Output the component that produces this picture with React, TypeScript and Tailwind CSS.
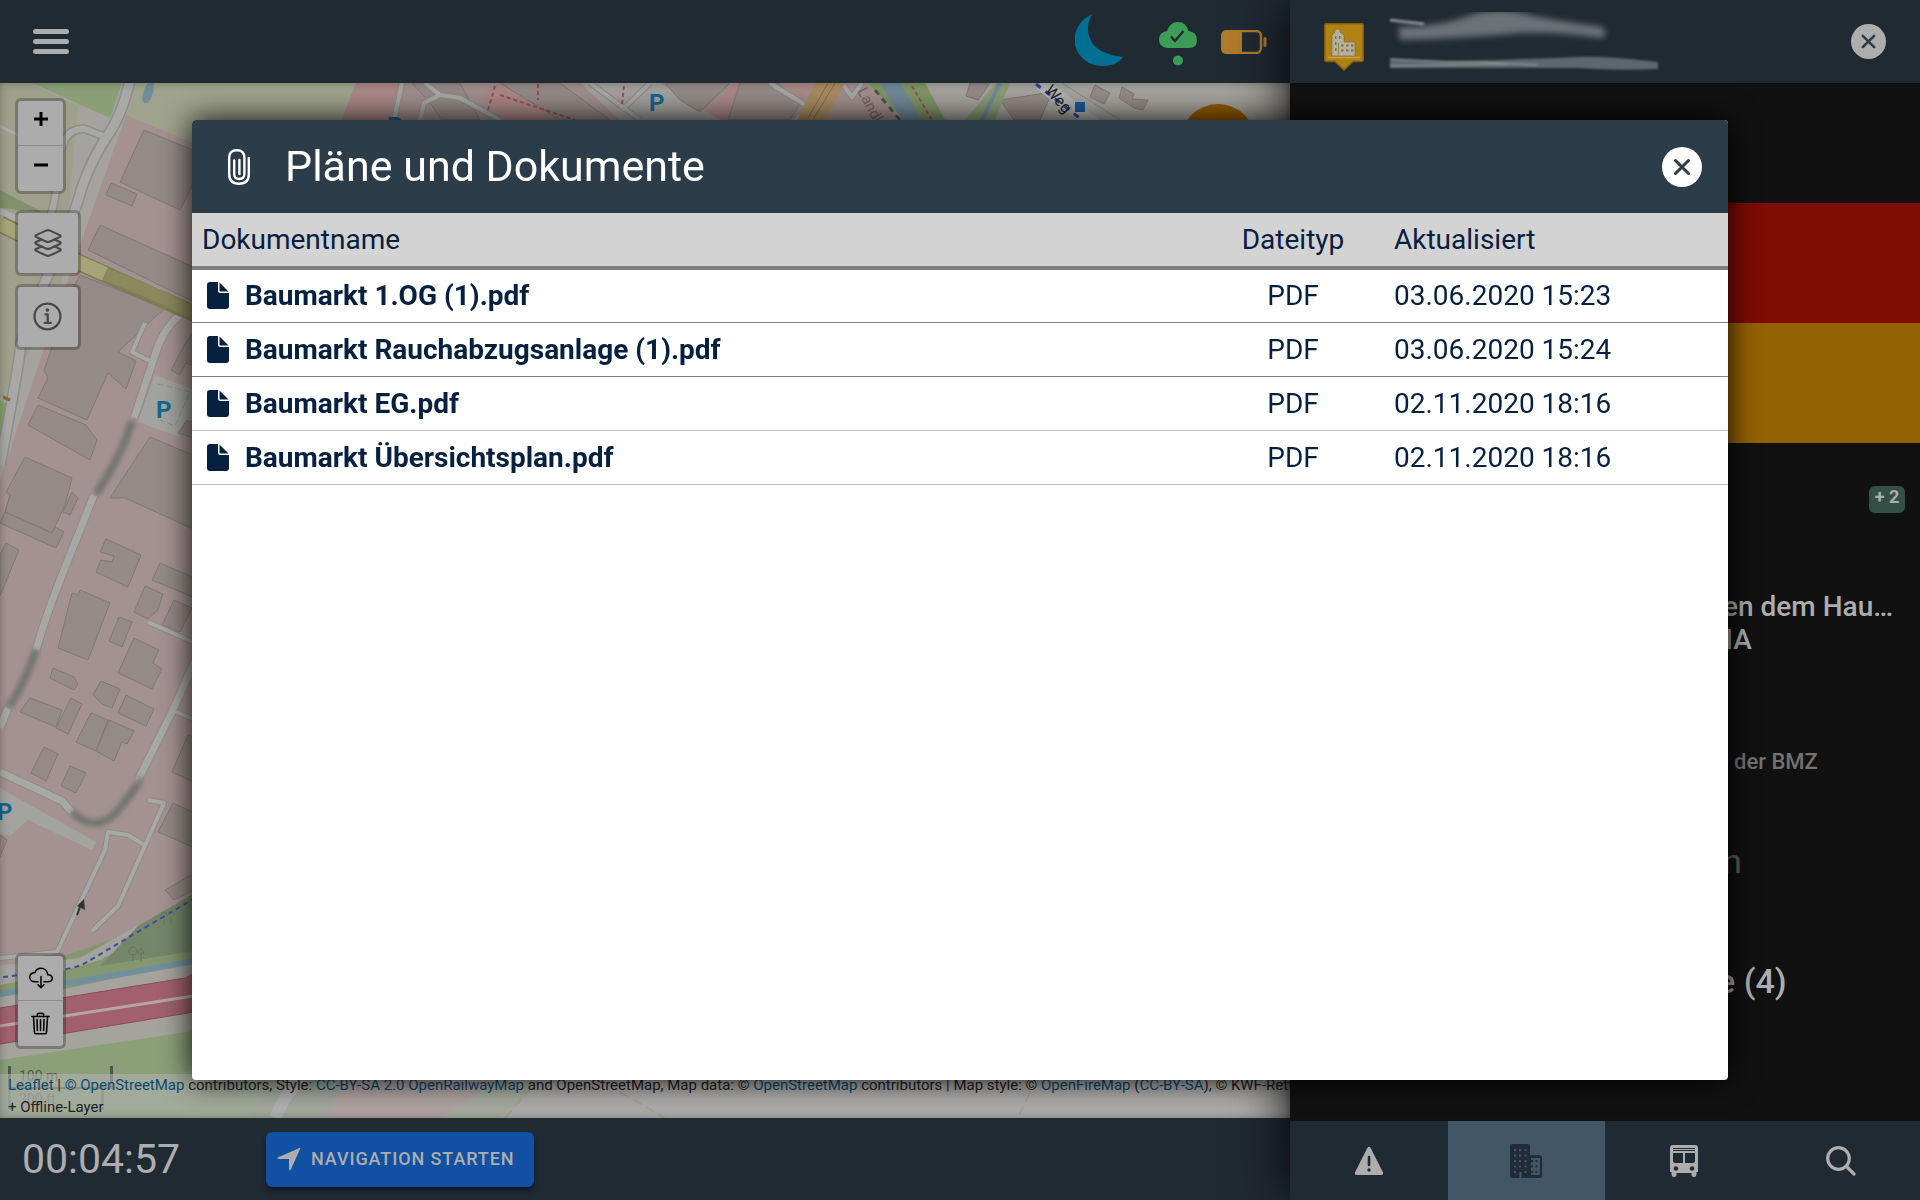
import type { ReactNode } from 'react';
import {
  IoCloudDownloadOutline,
  IoInformationCircleOutline,
  IoLayersOutline,
  IoTrashOutline,
} from 'react-icons/io5';

interface PlanDocument {
  name: string;
  type: string;
  updated: string;
  strongLine?: boolean;
}

const documents: PlanDocument[] = [
  { name: 'Baumarkt 1.OG (1).pdf', type: 'PDF', updated: '03.06.2020 15:23', strongLine: true },
  { name: 'Baumarkt Rauchabzugsanlage (1).pdf', type: 'PDF', updated: '03.06.2020 15:24', strongLine: true },
  { name: 'Baumarkt EG.pdf', type: 'PDF', updated: '02.11.2020 18:16' },
  { name: 'Baumarkt Übersichtsplan.pdf', type: 'PDF', updated: '02.11.2020 18:16' },
];

const buildings = [
  '144,130 200,153 200,170 180,210 120,182',
  '111,183 137,194 132,206 106,195',
  '100,225 200,270 200,305 88,250',
  '80,275 165,308 118,352 136,361 126,389 108,373 87,420 38,398 48,378 44,370 72,290',
  '38,405 86,425 97,440 90,460 28,425',
  '25,457 72,478 65,505 52,533 5,512 10,495 6,492',
  '72,492 78,498 70,515 63,512',
  '5,512 52,533 55,527 64,532 56,548 0,523',
  '6,543 19,550 0,596 0,555',
  '150,437 200,458 200,532 125,498 110,498',
  '200,325 186,342 171,370 180,375 186,363 200,368',
  '187,420 200,426 200,440 178,433',
  '106,539 141,555 128,587 96,572 101,560 112,562 114,556 100,552',
  '160,563 200,580 200,600 152,580',
  '80,590 110,603 88,660 58,648 72,593 78,595',
  '145,586 163,594 158,610 148,619 134,612',
  '174,600 192,608 180,632 162,625',
  '119,617 132,622 122,647 109,641',
  '134,638 159,650 153,663 162,669 152,689 118,673',
  '53,668 74,677 78,684 74,690 50,678',
  '101,681 120,689 112,708 102,704 93,695',
  '126,695 154,709 146,726 118,713',
  '71,698 82,704 68,734 56,728',
  '30,698 62,710 56,727 20,712',
  '91,713 108,720 96,751 76,742',
  '109,720 134,731 127,744 122,742 114,761 96,751 108,722',
  '44,747 58,754 46,781 31,773',
  '70,766 86,773 76,793 61,786',
  '173,803 200,815 200,850 158,832',
  '188,735 200,740 200,785 172,772',
  '200,870 165,890 174,900 200,887',
  '0,835 7,840 0,857',
  '412,83 460,83 480,120 442,120 430,103',
  '500,83 560,83 610,120 560,120',
  '665,83 730,83 700,112 680,100',
  '740,83 778,83 800,104 790,120 728,120',
  '970,83 990,83 978,100 966,96',
  '1000,100 1052,92 1040,120 1014,120',
  '1095,85 1110,93 1104,104 1090,97',
  '1122,87 1134,94 1132,99 1148,100 1143,110 1134,108 1119,98',
];

const parkingMarks = [
  { x: 156, y: 418 },
  { x: -3, y: 820 },
  { x: 649, y: 111 },
  { x: 387, y: 134 },
];

const mainRoads = [
  'M180,315 Q162,330 155,355 L134,418',
  'M94,495 Q78,535 62,575 T36,650',
  'M8,708 L0,728',
  'M0,772 L62,801 L72,812',
  'M138,780 L172,712 L200,650',
];

const localRoads = [
  'M145,323 L132,352 L152,362',
  'M172,710 L200,722',
  'M148,622 L200,645',
  'M0,958 L57,952 L105,850 L108,832 L128,835 L146,846',
  'M148,800 L164,803 L118,906 L92,931',
  'M394,120 L402,83',
  'M420,120 L424,103 L440,95 L425,83 M440,95 L460,98 L500,120',
  'M590,83 L640,120 M650,83 L622,110',
  'M770,83 L810,108 L795,120',
  'M842,83 L852,97 L862,83',
];

function MapCanvas() {
  return (
    <svg
      className="absolute inset-0 h-full w-full"
      viewBox="0 83 1290 1035"
      preserveAspectRatio="xMinYMin slice"
      aria-hidden="true"
    >
      <rect y="83" width="1290" height="1035" fill="#a5a39d" />

      {/* fields and meadows */}
      <path d="M125,83 H372 L355,150 H128 Z" fill="#a0a38d" />
      <path d="M0,83 L30,83 L78,106 L60,300 L0,400 Z" fill="#9fa08c" />
      <path d="M32,83 H122 L110,118 L72,101 Z" fill="#8a9f77" />
      <path d="M0,190 L42,212 L0,208 Z" fill="#82906b" />
      <path d="M0,400 L7,405 L0,440 Z" fill="#87a06f" />

      {/* industrial area */}
      <path d="M126,115 L200,146 V900 L140,925 L80,960 L0,965 V480 L45,345 L80,245 Z" fill="#a49291" />
      <path d="M356,83 H880 L900,120 H342 Z" fill="#a08f8c" />
      <path d="M356,83 H400 L388,120 H342 Z M505,120 L480,95 L500,83 L560,120 Z M735,83 L700,120 H730 L748,83 Z M780,83 H816 L800,100 Z" fill="#a98886" />
      <path d="M580,83 H660 L720,120 H620 Z" fill="#a3a09d" />
      <path d="M155,375 L200,392 V415 L177,436 L138,422 Z" fill="#a3a3a0" />
      <path d="M0,788 L96,842 L92,850 L28,820 L10,836 L0,833 Z" fill="#a3a3a0" />
      <path d="M158,384 L190,392 L175,426 L160,420" fill="none" stroke="#8e8e8c" strokeDasharray="6 3" />

      {buildings.map((points) => (
        <polygon key={points} points={points} fill="#948a87" stroke="#817775" />
      ))}

      {/* local roads */}
      <g fill="none" strokeLinejoin="round">
        {localRoads.map((d) => (
          <path key={d} d={d} stroke="#908987" strokeWidth="6" />
        ))}
        {mainRoads.map((d) => (
          <path key={d} d={d} stroke="#908987" strokeWidth="9" />
        ))}
        {localRoads.map((d) => (
          <path key={d} d={d} stroke="#a8a8a6" strokeWidth="4" />
        ))}
        {mainRoads.map((d) => (
          <path key={d} d={d} stroke="#a8a8a6" strokeWidth="7" />
        ))}
        <g stroke="#8f8d89" strokeWidth="12">
          <path d="M130,80 Q122,115 108,135 T82,187 Q75,215 48,275 T20,350 T0,465" />
          <path d="M62,150 Q65,128 85,129 L108,138 M56,190 Q54,215 42,230" strokeWidth="9" />
        </g>
        <g stroke="#a8a8a6" strokeWidth="9">
          <path d="M130,80 Q122,115 108,135 T82,187 Q75,215 48,275 T20,350 T0,465" />
          <path d="M62,150 Q65,128 85,129 L108,138 M56,190 Q54,215 42,230" strokeWidth="6" />
        </g>
        <path d="M0,211 L45,232" stroke="#adadab" strokeWidth="6" />
        <path d="M0,126 L20,136" stroke="#adadab" strokeWidth="3" />
        <path d="M0,224 L80,263 L140,290 L200,316" stroke="#7f7c56" strokeWidth="17" />
        <path d="M0,224 L80,263 L105,274" stroke="#a5a577" strokeWidth="14" />
        <path d="M105,274 L150,292 L200,316" stroke="#8a8a5d" strokeWidth="13" />
        <path d="M3,397 L10,400" stroke="#8a6a30" strokeWidth="3" />
      </g>

      {/* blurred out street names */}
      <g fill="none" stroke="#747673" strokeWidth="8" className="blur-[2px]">
        <path d="M132,421 Q122,455 96,494" />
        <path d="M36,650 Q26,680 9,707" />
        <path d="M72,812 Q98,836 120,808 T138,780" />
      </g>

      {/* stream, meadow and motorway */}
      <path d="M0,975 Q90,950 140,927 L200,890 V960 L60,990 L0,995 Z" fill="#84976f" />
      <path d="M0,966 L80,958 L138,925 L138,940 L100,960 L50,975 L0,985 Z" fill="#a5a39d" />
      <path d="M138,926 L200,890 V950 L100,966 Z" fill="#74876a" />
      <path d="M0,994 Q90,980 200,960" fill="none" stroke="#71909c" strokeWidth="6" />
      <path d="M0,1005 L200,970 V1045 L0,1062 Z" fill="#a5a39d" />
      <path d="M0,1008 L185,978 L200,968 V1011 L0,1044 Z" fill="#a0606f" />
      <path d="M0,1026 L200,995" stroke="#b5a5a5" strokeWidth="3" />
      <path d="M0,1008 L185,978 M0,1044 L200,1011" stroke="#914a5c" strokeWidth="1" />
      <path d="M0,1060 L200,1030 H340 V1118 H0 Z" fill="#8ba079" />
      <path d="M3,977 L20,975 Q60,972 82,965 L200,895" fill="none" stroke="#3d4ba3" strokeWidth="2" strokeDasharray="5 4" />
      <path d="M77,915 L81,904" stroke="#333" strokeWidth="2" />
      <path d="M84,899 L85,910 L77,906 Z" fill="#333" />
      <g fill="none" stroke="#66745c">
        <path d="M133,961 V954 M129,952 a4,5 0 1 1 8,0 a4,3 0 1 1 -8,0 M141,961 V953 M138,953 L141,948 L144,953 Z" />
        <path d="M164,925 V918 M161,916 a3,4 0 1 1 6,0 M171,923 V916 M168,915 a3,4 0 1 1 6,0" />
      </g>

      {/* strip along the upper edge */}
      <path d="M148,83 h6 q0,12 -5,19 q-6,3 -7,-3 q1,-10 6,-16 z" fill="#728f99" />
      <path d="M815,83 H845 L825,120 H797 Z" fill="#a88b63" />
      <path d="M835,83 L813,120 M828,83 L808,118" stroke="#86683d" />
      <path d="M868,83 H925 L945,120 H905 Z" fill="#7f9567" />
      <path d="M880,83 H900 L922,120 H902 Z" fill="#71899a" />
      <path d="M875,90 L900,120" stroke="#4e5b49" strokeWidth="3" strokeDasharray="6 5" />
      <path d="M912,86 L932,120 M495,86 L488,110 M500,95 L575,120 M624,86 L622,104 M538,84 V100" fill="none" stroke="#9f4a58" strokeWidth="2" strokeDasharray="4 3" />
      <path d="M996,83 H1010 L995,120 H965 Z" fill="#8a9c75" />
      <path d="M1000,83 L982,120" stroke="#71899a" strokeWidth="4" />
      <path d="M1040,83 L1095,125" stroke="#b0b0b0" strokeWidth="14" />
      <path d="M1062,83 L1120,120" stroke="#8a8a88" />
      <path d="M1036,84 L1082,120" stroke="#35419b" strokeWidth="3" strokeDasharray="6 6" />
      <rect x="1075" y="102" width="10" height="10" fill="#165a96" />
      <circle cx="1218" cy="142" r="38" fill="#945d02" />
      <text x="1044" y="91" transform="rotate(48 1044 91)" fontSize="16" fill="#222" className="font-[Roboto,sans-serif]">
        Weg
      </text>
      <text x="857" y="91" transform="rotate(62 857 91)" fontSize="15" fill="#77605f" className="font-[Roboto,sans-serif]">
        Landl
      </text>

      {/* strip along the lower edge */}
      <path d="M270,1080 H345 L325,1118 H250 Z" fill="#8b9a7c" />
      <path d="M350,1078 L325,1118 H440 L500,1078 Z" fill="#aa8c89" />
      <path d="M440,1118 L500,1078 H545 L500,1118 Z" fill="#93a181" />
      <path d="M300,1078 Q285,1095 275,1118" fill="none" stroke="#b0b0ae" strokeWidth="12" />
      <path d="M505,1118 L540,1078 M620,1092 L665,1118 M1030,1092 L1018,1118" stroke="#8e8a66" strokeWidth="2" strokeDasharray="10 5" />

      {parkingMarks.map(({ x, y }) => (
        <text key={`${x}-${y}`} x={x} y={y} fontSize="24" fontWeight="700" fill="#126690" className="font-[Roboto,sans-serif]">
          P
        </text>
      ))}
    </svg>
  );
}

function CloseButton({ className, label }: { className: string; label: string }) {
  return (
    <button type="button" aria-label={label} className={className}>
      <svg viewBox="0 0 40 40" className="h-full w-full">
        <circle cx="20" cy="20" r="20" fill="currentColor" />
        <path d="M13.5 13.5 26.5 26.5M26.5 13.5 13.5 26.5" stroke="#2d3c49" strokeWidth="3" strokeLinecap="round" />
      </svg>
    </button>
  );
}

function FileIcon() {
  return (
    <svg viewBox="0 0 22 27" className="h-[27px] w-[22px] shrink-0" fill="#06203f">
      <path d="M3 0H11V8.500Q11 11 13.500 11H22V24Q22 27 19 27H3Q0 27 0 24V3Q0 0 3 0Z" />
      <path d="M12.500 0.500 21.500 9.500H13.500Q12.500 9.500 12.500 8.500Z" />
    </svg>
  );
}

function PaperclipIcon() {
  return (
    <svg viewBox="0 0 22 36" className="h-9 w-[22px]" fill="none" stroke="#fff" strokeWidth="2.4" strokeLinecap="round">
      <path d="M20.800 9V25Q20.800 34.800 11 34.800T1.200 25V8.500Q1.200 1.200 8.800 1.200T16.400 8.500V24.500Q16.400 30 11.200 30T6.200 24.500V11.500" />
      <path d="M11.400 11V25" />
    </svg>
  );
}

function MapControl({ children }: { children: ReactNode }) {
  return (
    <div className="flex w-fit flex-col overflow-hidden rounded-md border-[3px] border-black/25 bg-[#acacac] bg-clip-padding text-black">
      {children}
    </div>
  );
}

function MapControls() {
  const small = 'flex h-[45px] w-[45px] items-center justify-center';
  const large = 'flex h-[60px] w-[60px] items-center justify-center text-[#484848]';

  return (
    <div className="absolute inset-x-[15px] top-[15px] bottom-[69px] flex flex-col justify-between">
      <div className="flex flex-col gap-2">
        <div className="mb-2">
          <MapControl>
            <button type="button" aria-label="Vergrößern" className={`${small} border-b border-[#8a8a8a]`}>
              <svg viewBox="0 0 14 14" className="mb-2 h-3.5 w-3.5">
                <path d="M7 0V14M0 7H14" stroke="#000" strokeWidth="3" />
              </svg>
            </button>
            <button type="button" aria-label="Verkleinern" className={small}>
              <svg viewBox="0 0 14 14" className="mb-2 h-3.5 w-3.5">
                <path d="M0 7H14" stroke="#000" strokeWidth="3" />
              </svg>
            </button>
          </MapControl>
        </div>
        <MapControl>
          <button type="button" aria-label="Ebenen" className={large}>
            <IoLayersOutline size={34} />
          </button>
        </MapControl>
        <MapControl>
          <button type="button" aria-label="Information" className={large}>
            <IoInformationCircleOutline size={36} />
          </button>
        </MapControl>
      </div>
      <MapControl>
        <button type="button" aria-label="Karte herunterladen" className={`${small} border-b border-[#8a8a8a]`}>
          <IoCloudDownloadOutline size={24} />
        </button>
        <button type="button" aria-label="Karte löschen" className={small}>
          <IoTrashOutline size={25} />
        </button>
      </MapControl>
    </div>
  );
}

function MapLink({ children }: { children: ReactNode }) {
  return (
    <a href="#" className="text-[#0c4a70]">
      {children}
    </a>
  );
}

function MapView() {
  return (
    <main className="relative flex-1 overflow-hidden">
      <MapCanvas />
      <MapControls />
      <div className="absolute bottom-2 left-2 text-sm leading-5 text-[#333]/70">
        <div className="h-[23px] w-[105px] border-x-[3px] border-b-2 border-[#444]/80 px-2">100 m</div>
        <div className="h-[21px] w-24 border-x-[3px] border-[#555]/50 px-2 text-[#333]/50">300 ft</div>
      </div>
      <div className="absolute inset-x-0 bottom-0 h-11 overflow-hidden bg-[#b2b2b2]/60 px-2 text-[15px] leading-[22px] whitespace-nowrap text-[#222]">
        <p>
          <MapLink>Leaflet</MapLink> | <MapLink>© OpenStreetMap</MapLink> contributors, Style:{' '}
          <MapLink>CC-BY-SA 2.0</MapLink> <MapLink>OpenRailwayMap</MapLink> and OpenStreetMap, Map data: ©{' '}
          <MapLink>OpenStreetMap</MapLink> contributors | Map style: © <MapLink>OpenFireMap</MapLink> (
          <MapLink>CC-BY-SA</MapLink>), © KWF-Rettungspunkte
        </p>
        <p>+ Offline-Layer</p>
      </div>
      <div className="pointer-events-none absolute inset-0 shadow-[inset_0_0_8px_rgba(0,0,0,0.3)]" />
    </main>
  );
}

function TopBar() {
  return (
    <header className="flex h-[83px] shrink-0 items-center justify-between bg-[#202a33] pr-[23px] pl-[33px]">
      <button type="button" aria-label="Menü" className="flex flex-col gap-[5px]">
        <span className="h-[5px] w-9 rounded-full bg-[#adadad]" />
        <span className="h-[5px] w-9 rounded-full bg-[#adadad]" />
        <span className="h-[5px] w-9 rounded-full bg-[#adadad]" />
      </button>
      <div className="flex items-center">
        <svg viewBox="0 0 48 54" className="mr-9 mb-1 h-[54px] w-12">
          <path d="M17.500 1Q9 15 16 28T48 44Q42 53 27 53Q12 53 4 41T2 16Q6 6 17.500 1Z" fill="#036f92" />
        </svg>
        <svg viewBox="0 0 38 44" className="mr-6 mt-1 h-11 w-[38px]">
          <path d="M8 26Q0 25 0 17.500Q0 10 8 9Q11 0 19 0T29.500 9Q38 10 38 18T30 26Z" fill="#3c9d57" />
          <path d="M12 14.500 16 19 24.500 9" fill="none" stroke="#202a33" strokeWidth="2.400" />
          <circle cx="19" cy="38.500" r="5" fill="#3c9d57" />
        </svg>
        <svg viewBox="0 0 46 24" className="h-6 w-[46px]">
          <rect x="1" y="1" width="39" height="22" rx="5" fill="none" stroke="#b07b2b" strokeWidth="2.400" />
          <path d="M5 1H21V23H5Q1 23 1 18V6Q1 1 5 1Z" fill="#b07b2b" />
          <rect x="42.500" y="7" width="3" height="10" rx="1.500" fill="#b07b2b" />
        </svg>
      </div>
    </header>
  );
}

function BottomBar() {
  return (
    <footer className="flex h-[82px] shrink-0 items-center bg-[#202a33] text-[#adadad]">
      <time className="w-[243px] pl-[22px] text-[41px] leading-none">00:04:57</time>
      <button
        type="button"
        className="ml-[23px] flex h-[55px] w-[268px] items-center rounded-md bg-[#1150a3] pl-[11px] text-lg font-medium tracking-wider shadow-md shadow-black/40"
      >
        <svg viewBox="0 0 24 24" className="mr-2.5 h-6 w-6 shrink-0" fill="currentColor">
          <path d="M22 1.200Q24 0 23 2.200L13.800 22.500Q12.500 24.500 12 22V12H1.800Q-.8 11.500 1.200 10.200Z" />
        </svg>
        NAVIGATION STARTEN
      </button>
    </footer>
  );
}

function ObjectMarker() {
  return (
    <svg viewBox="0 0 40 48" className="h-12 w-10">
      <path d="M2 .8H38Q39.200 .8 39.200 2V37Q39.200 38.500 37.500 38.500H29L20 47L11 38.500H2.500Q.8 38.500 .8 37V2Q.8 .8 2 .8Z" fill="#ae8213" stroke="#8a5c0b" strokeWidth="1.500" />
      <path d="M8 33V12L11 9V7.500L13.500 5.500L16 7.500V9L20 12V19H31V33Z" fill="#b3b0a4" stroke="#8a6a1c" strokeWidth=".7" />
      <path d="M4 34.500H36" stroke="#c5a34f" strokeWidth="1.500" />
      <path d="M11 13h1.500v3h-1.500zM15 13h1.500v3h-1.500zM11 19h1.500v3h-1.500zM11 25h1.500v3h-1.500zM17 21.500h2.500v2h-2.500zM22 21.500h2.500v2h-2.500zM27 21.500h2.500v2h-2.500zM17 26.500h2.500v2h-2.500zM22 26.500h2.500v2h-2.500zM27 26.500h2.500v2h-2.500z" fill="#8f6f20" />
      <path d="M14.500 20V33" stroke="#8f6f20" strokeWidth=".7" />
    </svg>
  );
}

function BlurredTitle() {
  return (
    <svg viewBox="0 0 280 60" className="ml-6 h-[60px] w-[280px]" aria-hidden="true">
      <g className="blur-[3px]">
        <path d="M10 15Q50 15 80 4T150 5Q180 10 214 15Q222 25 212 26Q160 18 120 22T12 28Z" fill="#6c7275" />
      </g>
      <g className="blur-[1px]">
        <path d="M2 8L36 12" stroke="#878b8d" strokeWidth="3" />
        <path d="M2 47Q60 50 110 48T190 45T270 50V57Q230 59 190 56H2Z" fill="#60676b" />
        <path d="M2 47L60 50H90L150 53M2 54L120 52" fill="none" stroke="#8a8f91" strokeWidth="1.500" />
      </g>
    </svg>
  );
}

function TabIcon({ name }: { name: string }) {
  switch (name) {
    case 'Gefahren':
      return (
        <svg viewBox="0 0 30 30" className="h-[30px] w-[30px]" fill="currentColor">
          <path d="M13.200 2.200Q15 -.5 16.800 2.200L28.800 26Q30 29 27 29H3Q0 29 1.200 26Z" />
          <path d="M15 11V19" stroke="#202a33" strokeWidth="2.600" strokeLinecap="round" />
          <circle cx="15" cy="24" r="1.700" fill="#202a33" />
        </svg>
      );
    case 'Objekt':
      return (
        <svg viewBox="0 0 32 34" className="h-[34px] w-8" fill="#202d38">
          <path d="M2 0H18Q20 0 20 2V11H29Q32 11 32 14V32Q32 34 30 34H11.500V28H9.500V34H2Q0 34 0 32V2Q0 0 2 0Z" />
          <path d="M21 14H30V31H21Z" fill="#425665" />
          <path d="M4 5h2v2H4zM9 5h2v2H9zM14.500 5h2v2h-2zM4 10.500h2v2H4zM9 10.500h2v2H9zM14.500 10.500h2v2h-2zM4 16h2v2H4zM9 16h2v2H9zM14.500 16h2v2h-2zM4 21.500h2v2H4zM9 21.500h2v2H9zM14.500 21.500h2v2h-2zM4 27h2v2H4zM14.500 27h2v2h-2z" fill="#425665" />
          <path d="M21 16h2v2h-2zM25.500 16h2v2h-2zM21 21.500h2v2h-2zM25.500 21.500h2v2h-2zM21 27h2v2h-2zM25.500 27h2v2h-2z" />
        </svg>
      );
    case 'Fahrzeuge':
      return (
        <svg viewBox="0 0 28 32" className="h-8 w-7" fill="currentColor">
          <path d="M3 0H25Q28 0 28 3V27H26.500V30Q26.500 32 24 32T21.500 30V28H6.500V30Q6.500 32 4 32T1.500 30V27H0V3Q0 0 3 0Z" />
          <path d="M3 3.500H25M3 5.500H25" stroke="#202a33" strokeWidth="1.200" />
          <path d="M3 8H13V18H5Q3 18 3 16ZM15 8H25V16Q25 18 23 18H15Z" fill="#202a33" />
          <circle cx="6" cy="23.500" r="2.200" fill="#202a33" />
          <circle cx="22" cy="23.500" r="2.200" fill="#202a33" />
        </svg>
      );
    default:
      return (
        <svg viewBox="0 0 30 30" className="h-[30px] w-[30px]" fill="none" stroke="currentColor" strokeWidth="3.200" strokeLinecap="round">
          <circle cx="12.500" cy="12.500" r="10.800" />
          <path d="M20.500 20.500 28 28" />
        </svg>
      );
  }
}

function SidePanel() {
  return (
    <aside className="flex w-[630px] shrink-0 flex-col bg-[#111] text-[#adadad] shadow-[0_0_50px_rgba(0,0,0,0.95)]">
      <header className="flex h-[83px] shrink-0 items-center bg-[#202a33] px-[34px]">
        <div className="pt-2.5">
          <ObjectMarker />
        </div>
        <BlurredTitle />
        <CloseButton label="Objekt schließen" className="ml-auto h-[35px] w-[35px]" />
      </header>
      <div className="h-[120px] shrink-0" />
      <div className="h-[120px] shrink-0 bg-[#7f0b02]" />
      <div className="h-[120px] shrink-0 bg-[#936203]" />
      <section className="flex min-h-0 flex-1 flex-col items-end overflow-hidden">
        <span className="mt-[43px] mr-[15px] h-[27px] w-9 rounded-md bg-[#335046] text-center text-lg leading-[22px] font-bold">
          + 2
        </span>
        <div className="w-[197px] pt-[77px]">
          <p className="text-[28px] leading-[33px] font-medium whitespace-nowrap">
            en dem Hau…
            <br />
            <span className="pl-0.5">IA</span>
          </p>
          <p className="mt-[93px] pl-[11px] text-[22px] leading-[26px] font-medium text-[#727272]">der BMZ</p>
          <p className="mt-[66px] text-[34px] leading-[40px] text-[#5f5f5f]">n</p>
          <p className="mt-20 -ml-1.5 text-[34px] leading-[40px] font-medium">e (4)</p>
        </div>
      </section>
      <nav className="grid h-[79px] shrink-0 grid-cols-4 bg-[#202a33]">
        {['Gefahren', 'Objekt', 'Fahrzeuge', 'Suche'].map((name) => (
          <button
            key={name}
            type="button"
            aria-label={name}
            className={`flex items-center justify-center ${name === 'Objekt' ? 'bg-[#425665]' : ''}`}
          >
            <TabIcon name={name} />
          </button>
        ))}
      </nav>
    </aside>
  );
}

function DocumentsDialog() {
  return (
    <div className="fixed inset-0 flex items-center justify-center">
      <div
        role="dialog"
        aria-modal="true"
        aria-labelledby="documents-title"
        className="flex h-4/5 w-4/5 flex-col overflow-hidden rounded-sm bg-white text-[#06203f] shadow-[0_0_30px_rgba(0,0,0,0.95)]"
      >
        <header className="flex h-[93px] shrink-0 items-center bg-[#2d3c49] pr-[26px] pl-9 text-white">
          <PaperclipIcon />
          <h1 id="documents-title" className="mb-0.5 ml-[35px] text-[43px] leading-[50px]">
            Pläne und Dokumente
          </h1>
          <CloseButton label="Schließen" className="ml-auto h-10 w-10" />
        </header>
        <table className="w-full table-fixed border-collapse text-[28px] leading-[33px]">
          <colgroup>
            <col />
            <col className="w-[186px]" />
            <col className="w-[342px]" />
          </colgroup>
          <thead>
            <tr className="h-[55px] border-b-4 border-[#808080] bg-[#d3d3d3]">
              <th className="pl-2.5 text-left font-normal">Dokumentname</th>
              <th className="text-center font-normal">Dateityp</th>
              <th className="pl-2 text-left font-normal">Aktualisiert</th>
            </tr>
          </thead>
          <tbody>
            {documents.map((doc) => (
              <tr
                key={doc.name}
                className={`h-[54px] border-b ${doc.strongLine ? 'border-[#808080]' : 'border-[#bcbcbc]'}`}
              >
                <td className="pl-[15px]">
                  <a href="#" className="flex items-center gap-4 font-bold">
                    <FileIcon />
                    {doc.name}
                  </a>
                </td>
                <td className="text-center">{doc.type}</td>
                <td className="pl-2">{doc.updated}</td>
              </tr>
            ))}
          </tbody>
        </table>
      </div>
    </div>
  );
}

export default function App() {
  return (
    <div className="flex h-screen overflow-hidden font-[Roboto,sans-serif]">
      <div className="flex min-w-0 flex-1 flex-col">
        <TopBar />
        <MapView />
        <BottomBar />
      </div>
      <div className="relative flex">
        <SidePanel />
      </div>
      <DocumentsDialog />
    </div>
  );
}
